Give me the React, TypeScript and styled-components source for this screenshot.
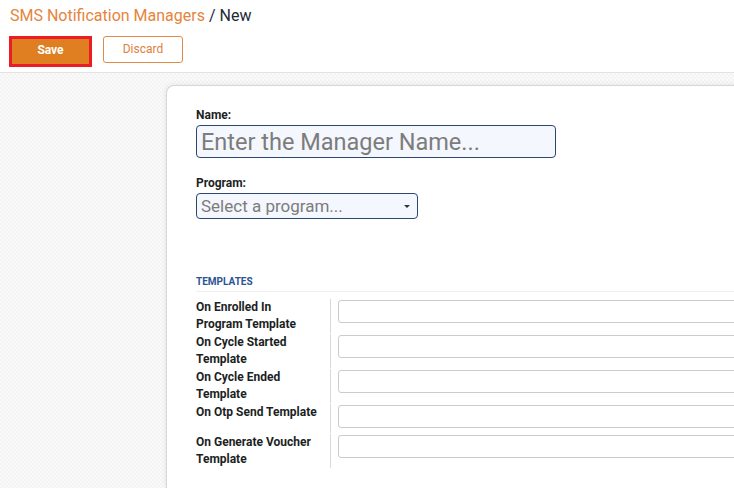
import React from 'react';
import styled, { createGlobalStyle } from 'styled-components';

const GlobalStyle = createGlobalStyle`
  html, body {
    margin: 0;
    padding: 0;
    background: #ffffff;
    font-family: Roboto, "Liberation Sans", Arial, sans-serif;
    overflow: hidden;
  }
`;

const templateRows = [
  { id: 'enrolled', label: ['On Enrolled In', 'Program Template'] },
  { id: 'started', label: ['On Cycle Started', 'Template'] },
  { id: 'ended', label: ['On Cycle Ended', 'Template'] },
  { id: 'otp', label: ['On Otp Send Template'] },
  { id: 'voucher', label: ['On Generate Voucher', 'Template'] },
];

const App = () => {
  return (
    <Page>
      <GlobalStyle />
      <ControlPanel>
        <Breadcrumb>
          <BreadcrumbLink>SMS Notification Managers</BreadcrumbLink>
          <BreadcrumbCurrent> / New</BreadcrumbCurrent>
        </Breadcrumb>
        <ButtonRow>
          <SaveButton>Save</SaveButton>
          <DiscardButton>Discard</DiscardButton>
        </ButtonRow>
      </ControlPanel>
      <SheetBackground>
        <Sheet>
          <FieldLabel>Name:</FieldLabel>
          <NameInput placeholder="Enter the Manager Name..." />
          <FieldLabel $spaced>Program:</FieldLabel>
          <SelectBox>
            <SelectPlaceholder>Select a program...</SelectPlaceholder>
            <Caret />
          </SelectBox>
          <GroupTitle>Templates</GroupTitle>
          <TemplateTable>
            {templateRows.map((row) => (
              <TemplateRow key={row.id}>
                <TemplateLabel>
                  {row.label.map((line) => (
                    <div key={line}>{line}</div>
                  ))}
                </TemplateLabel>
                <TemplateCell>
                  <TemplateInput />
                </TemplateCell>
              </TemplateRow>
            ))}
          </TemplateTable>
        </Sheet>
      </SheetBackground>
    </Page>
  );
};

const Page = styled.div`
  width: 734px;
  height: 488px;
  display: flex;
  flex-direction: column;
  overflow: hidden;
`;

const ControlPanel = styled.header`
  height: 73px;
  padding: 6px 0 0 10px;
  box-sizing: border-box;
  border-bottom: 1px solid #e2e2e2;
  background: #ffffff;
  flex-shrink: 0;
`;

const Breadcrumb = styled.div`
  font-size: 16px;
  line-height: 20px;
`;

const BreadcrumbLink = styled.span`
  color: #e5843c;
`;

const BreadcrumbCurrent = styled.span`
  color: #222a35;
`;

const ButtonRow = styled.div`
  display: flex;
  align-items: flex-start;
  gap: 11px;
  margin-top: 10px;
  margin-left: -1px;
`;

const SaveButton = styled.button`
  width: 83px;
  height: 31px;
  border: 3px solid #ec1c24;
  background: #e07f22;
  color: #ffffff;
  font-family: inherit;
  font-size: 12px;
  font-weight: 700;
  padding: 0 0 3px;
  cursor: pointer;
`;

const DiscardButton = styled.button`
  width: 80px;
  height: 27px;
  border: 1px solid #e08b47;
  border-radius: 3px;
  background: #ffffff;
  color: #e08040;
  font-family: inherit;
  font-size: 12px;
  padding: 0 0 2px;
  cursor: pointer;
`;

const SheetBackground = styled.main`
  flex: 1;
  display: flex;
  padding: 12px 0 0 166px;
  background-color: #f7f7f7;
  background-image: repeating-conic-gradient(#f3f3f3 0% 25%, #fafafa 0% 50%);
  background-size: 4px 4px;
  overflow: hidden;
`;

const Sheet = styled.section`
  width: 640px;
  flex-shrink: 0;
  box-sizing: border-box;
  padding: 22px 0 0 29px;
  background: #ffffff;
  border: 1px solid #d6d6d9;
  border-right: none;
  border-bottom: none;
  border-top-left-radius: 8px;
  box-shadow: 0 0 6px rgba(0, 0, 0, 0.08);
`;

const FieldLabel = styled.div<{ $spaced?: boolean }>`
  font-size: 12px;
  font-weight: 700;
  line-height: 14px;
  color: #1c1f24;
  margin-top: ${(p) => (p.$spaced ? '18px' : '0')};
  margin-bottom: 3px;
`;

const NameInput = styled.input`
  display: block;
  width: 360px;
  height: 33px;
  box-sizing: border-box;
  border: 1px solid #2d4670;
  border-radius: 4px;
  background: #f4f7fd;
  padding: 0 4px;
  font-family: inherit;
  font-size: 23.5px;
  color: #333;
  outline: none;

  &::placeholder {
    color: #7c7c7c;
  }
`;

const SelectBox = styled.div`
  width: 222px;
  height: 26px;
  box-sizing: border-box;
  border: 1px solid #2d4670;
  border-radius: 4px;
  background: #f4f7fd;
  display: flex;
  align-items: center;
  justify-content: space-between;
  padding: 0 7px 0 4px;
`;

const SelectPlaceholder = styled.span`
  font-size: 17px;
  color: #7c7c7c;
`;

const Caret = styled.span`
  width: 0;
  height: 0;
  border-left: 3px solid transparent;
  border-right: 3px solid transparent;
  border-top: 3px solid #333;
`;

const GroupTitle = styled.div`
  margin-top: 57px;
  padding-bottom: 3px;
  border-bottom: 1px solid #eeeeee;
  font-size: 10px;
  font-weight: 700;
  line-height: 12px;
  text-transform: uppercase;
  color: #2a5493;
`;

const TemplateTable = styled.div`
  margin-top: 7px;
  display: flex;
  flex-direction: column;
`;

const TemplateRow = styled.div`
  display: grid;
  grid-template-columns: 134px 1fr;
  padding-bottom: 1px;
`;

const TemplateLabel = styled.div`
  font-size: 12px;
  font-weight: 700;
  line-height: 17px;
  color: #1c1f24;
`;

const TemplateCell = styled.div`
  border-left: 1px solid #d9d9d9;
  padding-left: 7px;
`;

const TemplateInput = styled.input`
  display: block;
  width: 100%;
  height: 23px;
  box-sizing: border-box;
  margin: 1px 0 5px;
  border: 1px solid #cccccc;
  border-radius: 3px;
  background: #ffffff;
  outline: none;
`;

export default App;
